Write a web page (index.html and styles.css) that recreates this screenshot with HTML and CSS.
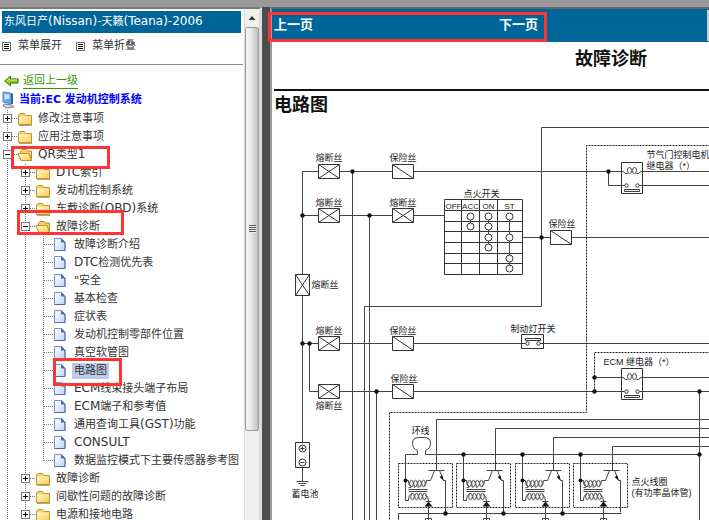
FILE: index.html
```html
<!DOCTYPE html>
<html lang="zh-CN">
<head>
<meta charset="utf-8">
<title>东风日产(Nissan)-天籁(Teana)-2006</title>
<link rel="stylesheet" href="styles.css">
</head>
<body>
<svg class="defs" aria-hidden="true">
  <defs>
    <linearGradient id="gold" x1="0" y1="0" x2="1" y2="1"><stop offset="0" stop-color="#fffbd0"/><stop offset="1" stop-color="#f8cb50"/></linearGradient>
    <linearGradient id="paper" x1="0" y1="0" x2="1" y2="1"><stop offset="0" stop-color="#ffffff"/><stop offset="1" stop-color="#bcd7f8"/></linearGradient>
    <symbol id="folder" viewBox="0 0 16 16">
      <path d="M1.500 13.500V4L3 2.500h4.500l1.500 2h5.500v9z" fill="#f3d36c" stroke="#bf9430"/>
      <path d="M2 5.500h12v7.500H2z" fill="url(#gold)"/><path d="M2 14.500h13" stroke="#b3a27c"/>
    </symbol>
    <symbol id="folder-open" viewBox="0 0 16 16">
      <path d="M3.500 12.500V4L5 2.500h4l1 1.500h4.500v9z" fill="#f5d468" stroke="#b88f30"/>
      <path d="M.8 6.500h11.400l2.300 7H4z" fill="url(#gold)" stroke="#be9330"/>
    </symbol>
    <symbol id="doc" viewBox="0 0 14 16">
      <path d="M1.500 1.500h7l3.500 3.500v8.500H1.500z" fill="url(#paper)" stroke="#7691d2"/>
      <path d="M8 1v4.500h4.500z" fill="#5367ac"/><path d="M1.500 13.500H12V5" fill="none" stroke="#5568ae"/>
    </symbol>
    <symbol id="list" viewBox="0 0 9 9">
      <path d="M.5.5h8v8h-8z" fill="#fff" stroke="#666"/><path d="M2 2.500h5M2 4.500h5M2 6.500h5" stroke="#000"/>
    </symbol>
    <g id="fuse-x"><path d="M0 0h21v14H0zM0 0l21 14M21 0L0 14" class="part"/></g>
    <g id="fuse-s"><path d="M0 0h21v14H0zM0 0l21 14" class="part"/></g>
    <g id="relay">
      <path d="M0 0h21v31H0z" class="part"/>
      <path d="M0 9h2q1 3 4 2M21 9h-2q-1 3-4 2" class="wire"/>
      <ellipse cx="8" cy="8" rx="2" ry="3" class="wire"/><ellipse cx="13" cy="8" rx="2" ry="3" class="wire"/>
      <path d="M0 23h3M18 23h3M3 27h15v2H3z" class="wire"/>
      <circle cx="5" cy="23" r="1.700" class="part"/><circle cx="16" cy="23" r="1.700" class="part"/>
    </g>
    <g id="coil">
      <path d="M0 0h54v44H0z" class="wire dash"/>
      <path d="M7-9V37h3q0-6 4-7M7 17h3q0 6 3 6M30 7h16M36 7l-4 10h-4q0 5-3 6M41 7l4 10h2V49" class="wire"/>
      <path d="M45 17l-4-3.500 3-1.500z" class="solid"/>
      <g class="wire"><ellipse cx="13" cy="20" rx="1.800" ry="3.200"/><ellipse cx="17" cy="20" rx="1.800" ry="3.200"/><ellipse cx="21" cy="20" rx="1.800" ry="3.200"/><ellipse cx="25" cy="20" rx="1.800" ry="3.200"/>
      <ellipse cx="14" cy="33" rx="1.800" ry="3.200"/><ellipse cx="18" cy="33" rx="1.800" ry="3.200"/><ellipse cx="22" cy="33" rx="1.800" ry="3.200"/><ellipse cx="26" cy="33" rx="1.800" ry="3.200"/>
      <path d="M10 24q2 1 3-1m2 0q1 2 2 0m2 0q1 2 2 0M10 26h19M10 28h19M27 31q3 2 3 7v19M27 38h6M27 55h6v4h-6z"/></g>
      <path d="M26 43l4-5 4 5z" class="solid"/>
      <circle cx="7" cy="17" r="2" class="solid"/>
    </g>
  </defs>
</svg>
<div class="topbar"></div>
<div class="frames">
  <aside class="side">
    <div class="menu">
      <h1 class="car">东风日产<span class="latin">(Nissan)-</span>天籁<span class="latin">(Teana)-2006</span></h1>
      <div class="tools">
        <button class="tool" type="button"><svg class="list"><use href="#list"/></svg>菜单展开</button>
        <button class="tool" type="button"><svg class="list"><use href="#list"/></svg>菜单折叠</button>
      </div>
      <a class="back" href="#"><svg class="arrow" viewBox="0 0 16 12"><path d="M.8 6L7 .8v3h8v4.400H7v3z" fill="#8dcc1c" stroke="#176b0c"/><path d="M3 6l3-2v1h8" fill="none" stroke="#ddf27c"/></svg><span>返回上一级</span></a>
      <div class="current"><svg class="pc" viewBox="0 0 16 18"><path d="M3 1l8 1v11l-8-2z" fill="#57aef2" stroke="#7187b5"/><path d="M4.500 3l5 .5v4l-5 1z" fill="#c5ecff"/><path d="M11 2l2 1v10l-2 0z" fill="#405fa8"/><path d="M4 13l8 1 2 2-7 1-4-2z" fill="#d4d7e0" stroke="#7b8095"/></svg>当前:EC 发动机控制系统</div>
      <ul class="tree">
        <li><div class="row"><button class="toggle" type="button" aria-label="展开"></button><svg class="icon"><use href="#folder"/></svg><a href="#">修改注意事项</a></div></li>
        <li><div class="row"><button class="toggle" type="button" aria-label="展开"></button><svg class="icon"><use href="#folder"/></svg><a href="#">应用注意事项</a></div></li>
        <li><div class="row"><button class="toggle open" type="button" aria-label="折叠"></button><svg class="icon"><use href="#folder-open"/></svg><a href="#"><span class="latin">QR</span>类型<span class="latin">1</span></a></div>
          <ul>
            <li><div class="row"><button class="toggle" type="button" aria-label="展开"></button><svg class="icon"><use href="#folder"/></svg><a href="#"><span class="latin">DTC</span>索引</a></div></li>
            <li><div class="row"><button class="toggle" type="button" aria-label="展开"></button><svg class="icon"><use href="#folder"/></svg><a href="#">发动机控制系统</a></div></li>
            <li><div class="row"><button class="toggle" type="button" aria-label="展开"></button><svg class="icon"><use href="#folder"/></svg><a href="#">车载诊断<span class="latin">(OBD)</span>系统</a></div></li>
            <li><div class="row"><button class="toggle open" type="button" aria-label="折叠"></button><svg class="icon"><use href="#folder-open"/></svg><a href="#">故障诊断</a></div>
              <ul>
                <li><div class="row leaf"><svg class="icon"><use href="#doc"/></svg><a href="#">故障诊断介绍</a></div></li>
                <li><div class="row leaf"><svg class="icon"><use href="#doc"/></svg><a href="#"><span class="latin">DTC</span>检测优先表</a></div></li>
                <li><div class="row leaf"><svg class="icon"><use href="#doc"/></svg><a href="#">"安全</a></div></li>
                <li><div class="row leaf"><svg class="icon"><use href="#doc"/></svg><a href="#">基本检查</a></div></li>
                <li><div class="row leaf"><svg class="icon"><use href="#doc"/></svg><a href="#">症状表</a></div></li>
                <li><div class="row leaf"><svg class="icon"><use href="#doc"/></svg><a href="#">发动机控制零部件位置</a></div></li>
                <li><div class="row leaf"><svg class="icon"><use href="#doc"/></svg><a href="#">真空软管图</a></div></li>
                <li><div class="row leaf"><svg class="icon"><use href="#doc"/></svg><a class="selected" href="#">电路图</a></div></li>
                <li><div class="row leaf"><svg class="icon"><use href="#doc"/></svg><a href="#"><span class="latin">ECM</span>线束接头端子布局</a></div></li>
                <li><div class="row leaf"><svg class="icon"><use href="#doc"/></svg><a href="#"><span class="latin">ECM</span>端子和参考值</a></div></li>
                <li><div class="row leaf"><svg class="icon"><use href="#doc"/></svg><a href="#">通用查询工具<span class="latin">(GST)</span>功能</a></div></li>
                <li><div class="row leaf"><svg class="icon"><use href="#doc"/></svg><a href="#"><span class="latin">CONSULT</span></a></div></li>
                <li class="end"><div class="row leaf"><svg class="icon"><use href="#doc"/></svg><a href="#">数据监控模式下主要传感器参考图</a></div></li>
              </ul>
            </li>
            <li><div class="row"><button class="toggle" type="button" aria-label="展开"></button><svg class="icon"><use href="#folder"/></svg><a href="#">故障诊断</a></div></li>
            <li><div class="row"><button class="toggle" type="button" aria-label="展开"></button><svg class="icon"><use href="#folder"/></svg><a href="#">间歇性问题的故障诊断</a></div></li>
            <li><div class="row"><button class="toggle" type="button" aria-label="展开"></button><svg class="icon"><use href="#folder"/></svg><a href="#">电源和接地电路</a></div></li>
          </ul>
        </li>
      </ul>
    </div>
    <div class="scrollbar"><div class="up"></div><div class="thumb"><span class="grip"></span></div></div>
    <div class="mark mark-type"></div>
    <div class="mark mark-diagnosis"></div>
    <div class="mark mark-circuit"></div>
  </aside>
  <div class="divider"></div>
  <main class="content">
    <nav class="pager"><a href="#">上一页</a><a href="#">下一页</a><span class="panel"></span></nav>
    <div class="mark mark-pager"></div>
    <div class="sheet">
      <h2 class="title">故障诊断</h2>
      <h3 class="section">电路图</h3>
      <svg class="diagram" width="438" height="406" viewBox="271.500 114.500 438 406" role="img" aria-label="电路图">
        <g class="wire">
          <path d="M302 171H710M302 171V442M302 215H444M522 237H710M302 343H710M309 343V391H710"/>
          <path d="M352 171V521M369 215V521M376 391V521M699 391V521"/>
          <path d="M710 127H541V306H364V521"/>
          <path class="dash" d="M710 145H586V412H389V521M710 352H594V391"/>
          <path d="M608 171V185H624M640 185H710M594 377H710"/>
          <path d="M710 419H436V470M710 428H495V470M710 437H553V470M710 446H612V470"/>
          <path d="M405 454H417V450Q412 448 412 443Q412 437 418 437H424Q430 437 430 443Q430 448 425 450V454H699"/>
          <path d="M398 521V513H621"/>
          <path d="M302 467V481M296 481H308M298 483H306M300 485H304"/>
        </g>
        <use href="#fuse-x" x="318" y="164"/><use href="#fuse-s" x="392" y="164"/>
        <use href="#fuse-x" x="318" y="208"/><use href="#fuse-x" x="392" y="208"/>
        <use href="#fuse-s" x="550" y="230"/>
        <use href="#fuse-x" x="318" y="336"/><use href="#fuse-s" x="392" y="336"/>
        <use href="#fuse-x" x="318" y="384"/><use href="#fuse-s" x="392" y="384"/>
        <path class="part" d="M295 274h14v21h-14zl14 21M309 274l-14 21"/>
        <use href="#relay" x="621" y="162"/><use href="#relay" x="621" y="368"/>
        <g class="part"><path d="M521 334h22v14h-22z"/><path d="M521 343h4M539 343h4M525 338h15v2h-15z"/><circle cx="527" cy="343" r="1.700"/><circle cx="538" cy="343" r="1.700"/></g>
        <g class="part"><path d="M295 442h14v25h-14z"/><circle cx="302" cy="448" r="3.500"/><circle cx="302" cy="462" r="3.500"/><path d="M300 448h4M302 446v4M300 462h4"/></g>
        <path class="part" d="M444 199h78v75h-78zM461 199v75M479 199v75M497 199v75M444 210h78M444 221h78M444 231h78M444 242h78M444 253h78M444 263h78"/>
        <g class="wire"><path d="M470 216v10M488 216v32M509 216v52"/></g>
        <g class="part"><circle cx="470" cy="216" r="3.500"/><circle cx="470" cy="226" r="3.500"/><circle cx="488" cy="216" r="3.500"/><circle cx="488" cy="226" r="3.500"/><circle cx="488" cy="237" r="3.500"/><circle cx="488" cy="247" r="3.500"/><circle cx="509" cy="216" r="3.500"/><circle cx="509" cy="237" r="3.500"/><circle cx="509" cy="258" r="3.500"/><circle cx="509" cy="268" r="3.500"/></g>
        <use href="#coil" x="398" y="463"/><use href="#coil" x="456" y="463"/><use href="#coil" x="515" y="463"/><use href="#coil" x="573" y="463"/>
        <g class="solid"><circle cx="352" cy="171" r="2.200"/><circle cx="608" cy="171" r="2.200"/><circle cx="302" cy="215" r="2.200"/><circle cx="369" cy="215" r="2.200"/><circle cx="541" cy="237" r="2.200"/><circle cx="302" cy="343" r="2.200"/><circle cx="309" cy="343" r="2.200"/><circle cx="376" cy="391" r="2.200"/><circle cx="594" cy="377" r="2.200"/><circle cx="594" cy="391" r="2.200"/><circle cx="699" cy="391" r="2.200"/><circle cx="699" cy="454" r="2.200"/><circle cx="463" cy="454" r="2.200"/><circle cx="522" cy="454" r="2.200"/><circle cx="580" cy="454" r="2.200"/><circle cx="445" cy="513" r="2.200"/><circle cx="503" cy="513" r="2.200"/><circle cx="562" cy="513" r="2.200"/></g>
        <g class="label">
          <text x="315" y="160">熔断丝</text><text x="389" y="160">保险丝</text>
          <text x="315" y="205">熔断丝</text><text x="389" y="205">熔断丝</text>
          <text x="463" y="196">点火开关</text><text x="548" y="226">保险丝</text>
          <text x="311" y="287">熔断丝</text><text x="315" y="333">熔断丝</text><text x="389" y="333">保险丝</text>
          <text x="390" y="381">保险丝</text><text x="315" y="408">熔断丝</text>
          <text x="510" y="331">制动灯开关</text><text x="603" y="364">ECM 继电器（*）</text>
          <text x="646" y="157">节气门控制电机</text><text x="646" y="168">继电器（*）</text>
          <text x="411" y="433">环线</text><text x="291" y="496">蓄电池</text>
          <text x="631" y="484">点火线圈</text><text x="631" y="495">(有功率晶体管)</text>
        </g>
        <g class="contact"><text x="453" y="208">OFF</text><text x="470" y="208">ACC</text><text x="488" y="208">ON</text><text x="509" y="208">ST</text></g>
      </svg>
    </div>
  </main>
</div>
</body>
</html>
```
FILE: styles.css
```css
* { box-sizing: border-box; }
body {
  margin: 0;
  height: 100vh;
  overflow: hidden;
  display: flex;
  flex-direction: column;
  background: #fff;
  color: #333;
  font: 11px/18px "DejaVu Sans", "Noto Sans CJK SC", sans-serif;
}
button { margin: 0; padding: 0; border: 0; background: none; font: inherit; color: inherit; }
a { color: inherit; text-decoration: none; }
.latin { font-size: 12px; line-height: 1; }
.defs { position: absolute; width: 0; height: 0; }

.topbar { flex: none; height: 7px; background: #999; }
.frames { flex: 1; min-height: 0; display: flex; }

.side {
  position: relative;
  flex: none;
  width: 262px;
  display: flex;
  overflow: hidden;
  border-top: 2px solid #777;
  border-right: 3px solid #ddd;
}
.menu { flex: 1; min-width: 0; white-space: nowrap; }
.car {
  margin: 2px 3px 0 2px;
  padding: 0 2px;
  background: #069;
  color: #fff;
  font-size: 11px;
  font-weight: normal;
  line-height: 22px;
}
.tools {
  display: flex;
  gap: 14px;
  height: 32px;
  margin-right: 1px;
  padding: 4px 2px 0;
  border-bottom: 1px solid #888;
}
.tool { display: flex; align-items: center; gap: 7px; height: 18px; }
.list { width: 9px; height: 9px; }
.back { display: flex; align-items: center; gap: 4px; margin-top: 8px; padding-left: 4px; color: #390; }
.back span { line-height: 15px; border-bottom: 1px solid #390; }
.arrow { width: 15px; height: 12px; }
.current { display: flex; align-items: center; gap: 3px; margin: 2px 0 1px; color: #00f; font-weight: bold; }
.pc { width: 16px; height: 18px; }

.tree, .tree ul { margin: 0; padding: 0; list-style: none; }
.tree ul { padding-left: 18px; }
.tree li { background: repeating-linear-gradient(#777 0 1px, transparent 1px 2px) 7px 0 / 1px 100% no-repeat; }
.tree .end { background-size: 1px 9px; }
.row {
  display: flex;
  align-items: center;
  height: 18px;
  background: repeating-linear-gradient(90deg, #777 0 1px, transparent 1px 2px) 8px 8px / 11px 1px no-repeat;
}
.leaf { padding-left: 17px; }
.toggle {
  flex: none;
  width: 9px;
  height: 9px;
  margin: 0 5px 1px 3px;
  border: 1px solid #777;
  background:
    linear-gradient(#000, #000) center / 5px 1px no-repeat,
    linear-gradient(#000, #000) center / 1px 5px no-repeat,
    #fff;
}
.toggle.open { background: linear-gradient(#000, #000) center / 5px 1px no-repeat, #fff; }
.icon { flex: none; width: 16px; height: 16px; margin-right: 3px; }
.leaf .icon { width: 14px; margin-right: 5px; }
.row a { padding: 0 2px; line-height: 16px; }
.selected { background: #bccbe8; }

.scrollbar { flex: none; width: 15px; background: #f0f0f0; border-left: 1px solid #ddd; }
.up { width: 7px; height: 18px; margin: 0 auto; background: #333; clip-path: polygon(50% 7px, 100% 11px, 0 11px); }
.thumb {
  height: 404px;
  display: flex;
  align-items: center;
  justify-content: center;
  border: 1px solid #999;
  border-radius: 2px;
  background: linear-gradient(90deg, #f7f7f7, #e6e6e8 45%, #bdbdc4);
}
.grip { width: 7px; height: 8px; background: repeating-linear-gradient(#555 0 1px, #eee 1px 2px); }

.divider { flex: none; width: 8px; background: #4d4d4d; }

.content {
  position: relative;
  flex: 1;
  min-width: 0;
  border-top: 2px solid #666;
  border-left: 2px solid #999;
}
.pager { display: flex; height: 33px; padding-left: 2px; background: #069; color: #fff; font-size: 13px; font-weight: bold; line-height: 32px; }
.pager a { flex: none; width: 225px; }
.pager a + a { width: auto; }
.panel { width: 2px; height: 31px; margin: 1px 0 0 auto; background: #ccc; }
.sheet { overflow: hidden; padding-left: 2px; color: #111; }
.title { width: 674px; margin: 0; height: 49px; padding-top: 2px; border-bottom: 2px solid #111; text-align: center; font: bold 18px/26px "Noto Sans CJK SC", sans-serif; }
.section { margin: 0; font: bold 18px/24px "Noto Sans CJK SC", sans-serif; }
.diagram { display: block; margin-left: -2px; }
.wire { fill: none; stroke: #444; stroke-width: 1; }
.part { fill: #fff; stroke: #333; stroke-width: 1; }
.dash { stroke: #222; stroke-dasharray: 2 1; }
.solid { fill: #111; stroke: none; }
.label { fill: #222; font: 9px "Liberation Sans", "Noto Sans CJK SC", sans-serif; }
.contact { fill: #222; font: 8px "Liberation Sans", sans-serif; text-anchor: middle; }

.mark { position: absolute; border: 3px solid #fd3432; pointer-events: none; }
.mark-type { left: 11px; top: 137px; width: 99px; height: 23px; }
.mark-diagnosis { left: 17px; top: 201px; width: 107px; height: 25px; }
.mark-circuit { left: 53px; top: 349px; width: 69px; height: 28px; }
.mark-pager { left: -4px; top: 3px; width: 279px; height: 30px; }
```
